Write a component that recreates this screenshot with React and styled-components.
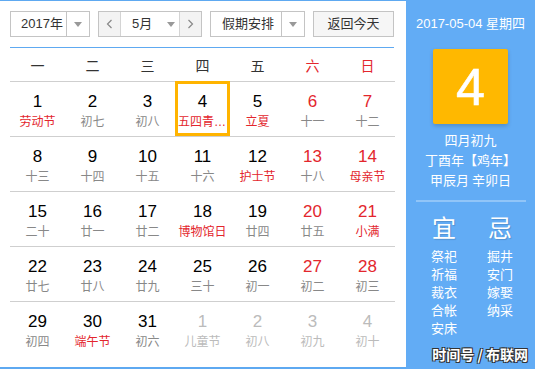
import styled, { createGlobalStyle } from "styled-components";

const GlobalStyle = createGlobalStyle`
  html, body {
    margin: 0;
    padding: 0;
    background: #fff;
  }
  body {
    font-family: "Liberation Sans", Arial, "Noto Sans CJK SC", sans-serif;
    color: #333;
  }
`;

const LINE = "#5ea9f1";
const RED = "#e3262d";

const weeks = [
  [
    { d: 1, l: "劳动节", fest: true },
    { d: 2, l: "初七" },
    { d: 3, l: "初八" },
    { d: 4, l: "五四青年节", fest: true, today: true },
    { d: 5, l: "立夏", fest: true },
    { d: 6, l: "十一" },
    { d: 7, l: "十二" },
  ],
  [
    { d: 8, l: "十三" },
    { d: 9, l: "十四" },
    { d: 10, l: "十五" },
    { d: 11, l: "十六" },
    { d: 12, l: "护士节", fest: true },
    { d: 13, l: "十八" },
    { d: 14, l: "母亲节", fest: true },
  ],
  [
    { d: 15, l: "二十" },
    { d: 16, l: "廿一" },
    { d: 17, l: "廿二" },
    { d: 18, l: "博物馆日", fest: true },
    { d: 19, l: "廿四" },
    { d: 20, l: "廿五" },
    { d: 21, l: "小满", fest: true },
  ],
  [
    { d: 22, l: "廿七" },
    { d: 23, l: "廿八" },
    { d: 24, l: "廿九" },
    { d: 25, l: "三十" },
    { d: 26, l: "初一" },
    { d: 27, l: "初二" },
    { d: 28, l: "初三" },
  ],
  [
    { d: 29, l: "初四" },
    { d: 30, l: "端午节", fest: true },
    { d: 31, l: "初六" },
    { d: 1, l: "儿童节", other: true },
    { d: 2, l: "初八", other: true },
    { d: 3, l: "初九", other: true },
    { d: 4, l: "初十", other: true },
  ],
];

const weekdays = ["一", "二", "三", "四", "五", "六", "日"];
const yi = ["祭祀", "祈福", "裁衣", "合帐", "安床"];
const ji = ["掘井", "安门", "嫁娶", "纳采"];

const Page = styled.div`
  display: flex;
  width: 535px;
  height: 369px;
  overflow: hidden;
`;

const Main = styled.section`
  width: 406px;
  height: 369px;
  box-sizing: border-box;
  border-top: 1px solid ${LINE};
  border-bottom: 2px solid ${LINE};
  padding: 10px 11px 0 10px;
`;

const Toolbar = styled.div`
  display: flex;
  justify-content: space-between;
  width: 384px;
  height: 26px;
`;

const SelectBox = styled.div`
  display: flex;
  width: ${(p) => p.w}px;
  height: 26px;
  box-sizing: border-box;
  border: 1px solid #c4c4c4;
  background: #fff;
  font-size: 13px;
  line-height: 24px;
  color: #333;
`;

const Label = styled.div`
  width: ${(p) => p.w}px;
  box-sizing: border-box;
  padding-left: ${(p) => p.pl || 10}px;
  white-space: nowrap;
`;

const Caret = styled.div`
  flex: 1;
  display: flex;
  align-items: center;
  justify-content: center;
  border-left: ${(p) => (p.plain ? "none" : "1px solid #c4c4c4")};
  &::after {
    content: "";
    border-left: 4px solid transparent;
    border-right: 4px solid transparent;
    border-top: 5px solid #999;
  }
`;

const ArrowBtn = styled.div`
  width: 21px;
  display: flex;
  align-items: center;
  justify-content: center;
  background: #f3f3f3;
  border-${(p) => (p.left ? "right" : "left")}: 1px solid #d4d4d4;
`;

const TodayBtn = styled.div`
  width: 81px;
  height: 26px;
  box-sizing: border-box;
  border: 1px solid #c4c4c4;
  background: #f6f6f6;
  font-size: 13px;
  line-height: 24px;
  text-align: center;
  color: #333;
`;

const Divider = styled.div`
  height: 1px;
  margin-top: 10px;
  width: 384px;
  background: ${LINE};
`;

const WeekHead = styled.div`
  display: grid;
  grid-template-columns: repeat(7, 55px);
  height: 33px;
  align-items: center;
  text-align: center;
  font-size: 14px;
`;

const WeekName = styled.div`
  color: ${(p) => (p.weekend ? RED : "#333")};
  font-family: "Noto Sans CJK SC", sans-serif;
  line-height: 20px;
`;

const Grid = styled.div`
  display: grid;
  grid-template-columns: repeat(7, 55px);
`;

const Cell = styled.div`
  height: 55px;
  box-sizing: border-box;
  text-align: center;
  border-top: 1px solid #cfcfcf;
  padding-top: 10px;
  ${(p) =>
    p.today &&
    `
    border: 3px solid #ffb400;
    padding: 8px 0 0;
  `}
`;

const Num = styled.div`
  font-size: 17px;
  line-height: 20px;
  color: ${(p) => (p.other ? "#bbb" : p.red ? RED : "#000")};
`;

const Lunar = styled.div`
  font-family: "Liberation Sans", "Noto Sans CJK SC", sans-serif;
  font-size: 12px;
  line-height: 20px;
  color: ${(p) => (p.other ? "#bbb" : p.fest ? RED : "#888")};
  white-space: nowrap;
  overflow: hidden;
  text-overflow: ellipsis;
`;

const Panel = styled.aside`
  width: 129px;
  height: 369px;
  background: #62acf5;
  color: #fff;
  display: flex;
  flex-direction: column;
  align-items: center;
  font-size: 13px;
`;

const DateLine = styled.div`
  margin-top: 14px;
  line-height: 20px;
  white-space: nowrap;
`;

const BigDay = styled.div`
  margin-top: 15px;
  width: 75px;
  height: 75px;
  background: #ffb800;
  border-radius: 2px;
  box-shadow: 0 2px 4px rgba(0, 0, 0, 0.18);
  display: flex;
  align-items: center;
  justify-content: center;
  font-size: 52px;
  line-height: 1;
  -webkit-text-stroke: 0.6px #fff;
`;

const Info = styled.div`
  margin-top: 6px;
  text-align: center;
  line-height: 20px;
  font-family: "Noto Sans CJK SC", sans-serif;
`;

const PanelRule = styled.div`
  margin-top: 10px;
  width: 110px;
  height: 2px;
  background: rgba(255, 255, 255, 0.3);
`;

const Advice = styled.div`
  display: grid;
  grid-template-columns: 56px 56px;
  margin-top: 11px;
  margin-left: 3px;
  font-family: "Noto Sans CJK SC", sans-serif;
  text-align: center;
`;

const AdviceHead = styled.div`
  font-size: 24px;
  line-height: 28px;
  margin-bottom: 6px;
  text-shadow: 1px 1px 1px rgba(0, 0, 0, 0.15);
`;

const AdviceItem = styled.div`
  line-height: 18px;
`;

const Watermark = styled.div`
  margin-top: auto;
  margin-bottom: 5px;
  align-self: flex-end;
  margin-right: 7px;
  font-family: "Noto Sans CJK SC", sans-serif;
  font-size: 14px;
  font-weight: bold;
  line-height: 20px;
  color: #fff;
  text-shadow: 1px 1px 0 #333, -1px -1px 0 #333, 1px -1px 0 #333,
    -1px 1px 0 #333;
  white-space: nowrap;
`;

const Chevron = ({ dir }) => (
  <svg width="7" height="10" viewBox="0 0 7 10">
    <polyline
      points={dir === "left" ? "5.5,1 1.5,5 5.5,9" : "1.5,1 5.5,5 1.5,9"}
      fill="none"
      stroke="#888"
      strokeWidth="1.2"
    />
  </svg>
);

export default function App() {
  return (
    <>
      <GlobalStyle />
      <Page>
        <Main>
          <Toolbar>
            <SelectBox w={80}>
              <Label w={55}>2017年</Label>
              <Caret />
            </SelectBox>
            <SelectBox w={104}>
              <ArrowBtn left>
                <Chevron dir="left" />
              </ArrowBtn>
              <Label w={42} pl={11}>
                5月
              </Label>
              <Caret plain />
              <ArrowBtn>
                <Chevron dir="right" />
              </ArrowBtn>
            </SelectBox>
            <SelectBox w={95}>
              <Label w={70} pl={11}>
                假期安排
              </Label>
              <Caret />
            </SelectBox>
            <TodayBtn>返回今天</TodayBtn>
          </Toolbar>
          <Divider />
          <WeekHead>
            {weekdays.map((w, i) => (
              <WeekName key={w} weekend={i > 4}>
                {w}
              </WeekName>
            ))}
          </WeekHead>
          <Grid>
            {weeks.map((week, wi) =>
              week.map((c, i) => (
                <Cell key={`${wi}-${i}`} today={c.today}>
                  <Num red={i > 4} other={c.other}>
                    {c.d}
                  </Num>
                  <Lunar fest={c.fest} other={c.other}>
                    {c.l}
                  </Lunar>
                </Cell>
              ))
            )}
          </Grid>
        </Main>
        <Panel>
          <DateLine>2017-05-04 星期四</DateLine>
          <BigDay>4</BigDay>
          <Info>
            <div>四月初九</div>
            <div>丁酉年【鸡年】</div>
            <div>甲辰月 辛卯日</div>
          </Info>
          <PanelRule />
          <Advice>
            <div>
              <AdviceHead>宜</AdviceHead>
              {yi.map((t) => (
                <AdviceItem key={t}>{t}</AdviceItem>
              ))}
            </div>
            <div>
              <AdviceHead>忌</AdviceHead>
              {ji.map((t) => (
                <AdviceItem key={t}>{t}</AdviceItem>
              ))}
            </div>
          </Advice>
          <Watermark>时间号 / 布联网</Watermark>
        </Panel>
      </Page>
    </>
  );
}
